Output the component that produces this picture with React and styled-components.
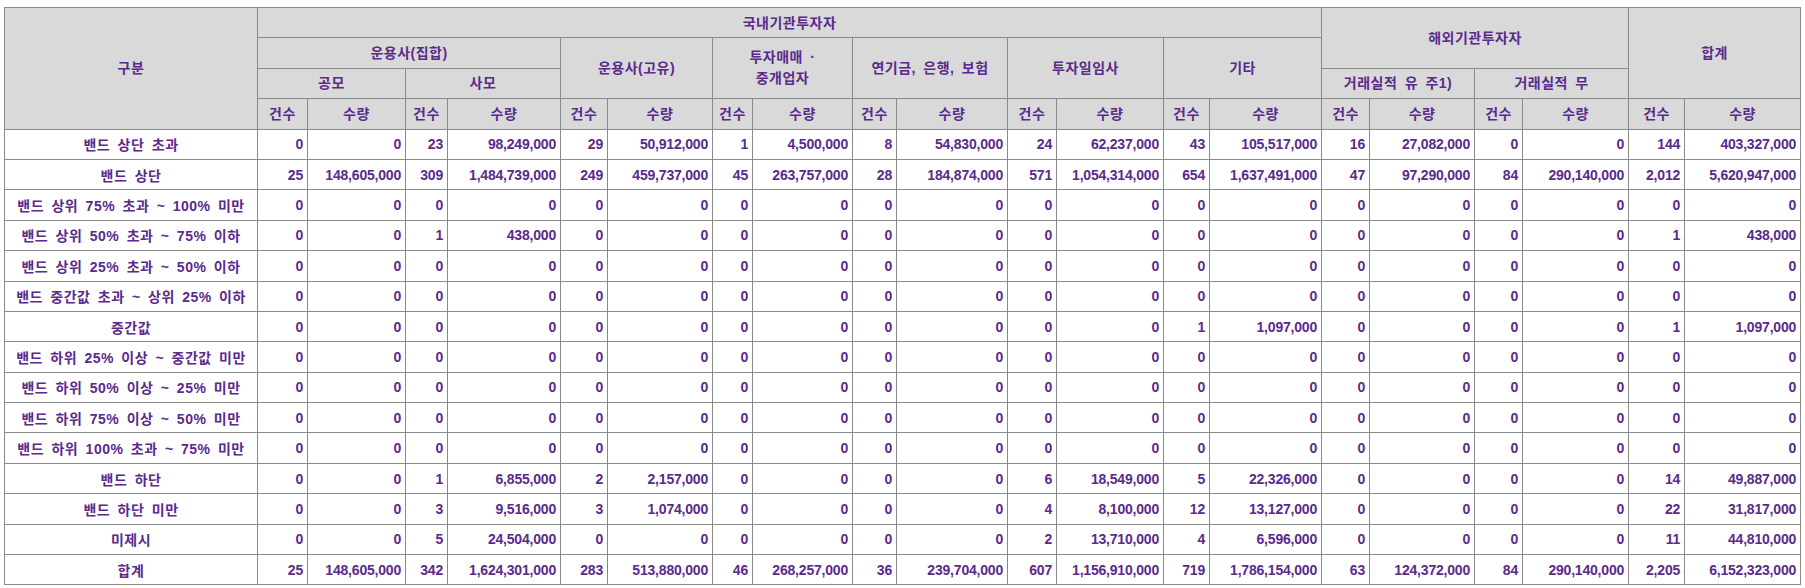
import React from 'react';
import styled, { createGlobalStyle } from 'styled-components';

const GlobalStyle = createGlobalStyle`
  html, body {
    margin: 0;
    padding: 0;
    background: #ffffff;
  }
  body {
    font-family: "Liberation Sans", "Noto Sans CJK KR", sans-serif;
  }
`;

const Page = styled.div`
  padding: 7px 0 0 4px;
`;

const Table = styled.table`
  border-collapse: collapse;
  table-layout: fixed;
  width: 1796px;
  border: 1px solid #000000;
  color: #5a2a8c;
  font-weight: bold;
`;

const Row = styled.tr`
  height: 30.4px;
`;

const HeadCell = styled.th`
  background: #d9d9d9;
  border: 1px solid #8a8a8a;
  font-size: 14px;
  font-weight: bold;
  letter-spacing: 0.5px;
  word-spacing: 3px;
  text-align: center;
  vertical-align: middle;
  padding: 0 2px;
  line-height: ${(p) => (p.$multi ? '21px' : '18px')};
  white-space: nowrap;
`;

const LabelCell = styled.td`
  border: 1px solid #8a8a8a;
  font-size: 14px;
  letter-spacing: 0.5px;
  word-spacing: 3px;
  text-align: center;
  white-space: nowrap;
  padding: 0;
`;

const NumCell = styled.td`
  border: 1px solid #8a8a8a;
  font-size: 14px;
  letter-spacing: -0.2px;
  text-align: right;
  padding: 0 4px 0 0;
  white-space: nowrap;
`;

const widths = [
  253, 50, 98, 42, 113, 47, 105, 40, 100, 44, 111, 49, 107, 46, 112, 48, 105, 48, 106, 56, 116,
];

const Z = Array(20).fill('0');

const rows = [
  ['밴드 상단 초과', ['0', '0', '23', '98,249,000', '29', '50,912,000', '1', '4,500,000', '8', '54,830,000', '24', '62,237,000', '43', '105,517,000', '16', '27,082,000', '0', '0', '144', '403,327,000']],
  ['밴드 상단', ['25', '148,605,000', '309', '1,484,739,000', '249', '459,737,000', '45', '263,757,000', '28', '184,874,000', '571', '1,054,314,000', '654', '1,637,491,000', '47', '97,290,000', '84', '290,140,000', '2,012', '5,620,947,000']],
  ['밴드 상위 75% 초과 ~ 100% 미만', Z],
  ['밴드 상위 50% 초과 ~ 75% 이하', ['0', '0', '1', '438,000', '0', '0', '0', '0', '0', '0', '0', '0', '0', '0', '0', '0', '0', '0', '1', '438,000']],
  ['밴드 상위 25% 초과 ~ 50% 이하', Z],
  ['밴드 중간값 초과 ~ 상위 25% 이하', Z],
  ['중간값', ['0', '0', '0', '0', '0', '0', '0', '0', '0', '0', '0', '0', '1', '1,097,000', '0', '0', '0', '0', '1', '1,097,000']],
  ['밴드 하위 25% 이상 ~ 중간값 미만', Z],
  ['밴드 하위 50% 이상 ~ 25% 미만', Z],
  ['밴드 하위 75% 이상 ~ 50% 미만', Z],
  ['밴드 하위 100% 초과 ~ 75% 미만', Z],
  ['밴드 하단', ['0', '0', '1', '6,855,000', '2', '2,157,000', '0', '0', '0', '0', '6', '18,549,000', '5', '22,326,000', '0', '0', '0', '0', '14', '49,887,000']],
  ['밴드 하단 미만', ['0', '0', '3', '9,516,000', '3', '1,074,000', '0', '0', '0', '0', '4', '8,100,000', '12', '13,127,000', '0', '0', '0', '0', '22', '31,817,000']],
  ['미제시', ['0', '0', '5', '24,504,000', '0', '0', '0', '0', '0', '0', '2', '13,710,000', '4', '6,596,000', '0', '0', '0', '0', '11', '44,810,000']],
  ['합계', ['25', '148,605,000', '342', '1,624,301,000', '283', '513,880,000', '46', '268,257,000', '36', '239,704,000', '607', '1,156,910,000', '719', '1,786,154,000', '63', '124,372,000', '84', '290,140,000', '2,205', '6,152,323,000']],
];

const App = () => {
  const pairs = Array.from({ length: 10 });

  return (
    <Page>
      <GlobalStyle />
      <Table>
        <colgroup>
          {widths.map((w, i) => (
            <col key={i} style={{ width: w }} />
          ))}
        </colgroup>
        <thead>
          <Row>
            <HeadCell rowSpan={4}>구분</HeadCell>
            <HeadCell colSpan={14}>국내기관투자자</HeadCell>
            <HeadCell colSpan={4} rowSpan={2}>해외기관투자자</HeadCell>
            <HeadCell colSpan={2} rowSpan={3}>합계</HeadCell>
          </Row>
          <Row>
            <HeadCell colSpan={4}>운용사(집합)</HeadCell>
            <HeadCell colSpan={2} rowSpan={2}>운용사(고유)</HeadCell>
            <HeadCell colSpan={2} rowSpan={2} $multi>
              투자매매 ·<br />
              중개업자
            </HeadCell>
            <HeadCell colSpan={2} rowSpan={2}>연기금, 은행, 보험</HeadCell>
            <HeadCell colSpan={2} rowSpan={2}>투자일임사</HeadCell>
            <HeadCell colSpan={2} rowSpan={2}>기타</HeadCell>
          </Row>
          <Row>
            <HeadCell colSpan={2}>공모</HeadCell>
            <HeadCell colSpan={2}>사모</HeadCell>
            <HeadCell colSpan={2}>거래실적 유 주1)</HeadCell>
            <HeadCell colSpan={2}>거래실적 무</HeadCell>
          </Row>
          <Row>
            {pairs.map((_, i) => (
              <React.Fragment key={i}>
                <HeadCell>건수</HeadCell>
                <HeadCell>수량</HeadCell>
              </React.Fragment>
            ))}
          </Row>
        </thead>
        <tbody>
          {rows.map(([label, values]) => (
            <Row key={label}>
              <LabelCell>{label}</LabelCell>
              {values.map((v, i) => (
                <NumCell key={i}>{v}</NumCell>
              ))}
            </Row>
          ))}
        </tbody>
      </Table>
    </Page>
  );
};

export default App;
